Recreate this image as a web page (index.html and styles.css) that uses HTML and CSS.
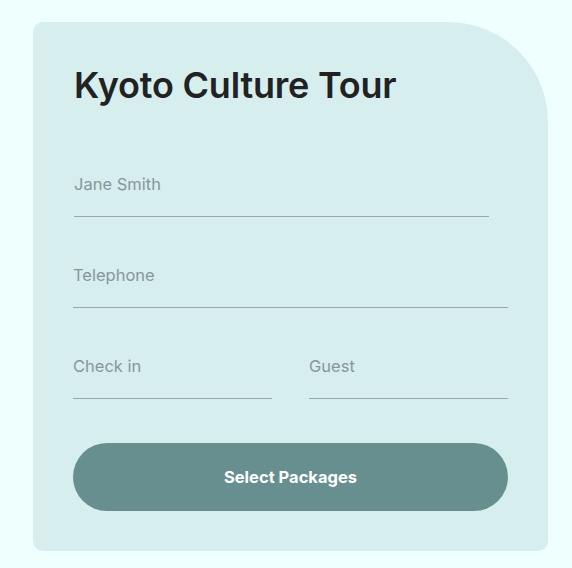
FILE: index.html
```html
<!DOCTYPE html>
<html lang="en">
<head>
    <meta charset="UTF-8">
    <meta name="viewport" content="width=device-width, initial-scale=1.0">
    <title>Kyoto Culture Tour</title>
    <link rel="stylesheet" href="styles.css">
</head>
<body>

    <div class="booking-card">
        <h1>Kyoto Culture Tour</h1>

        <form id="bookingForm">
            <input type="text" class="field field-name" placeholder="Jane Smith">
            <input type="tel" class="field" placeholder="Telephone">
            <div class="field-row">
                <input type="text" class="field" placeholder="Check in">
                <input type="text" class="field" placeholder="Guest">
            </div>
            <button type="submit">Select Packages</button>
        </form>
    </div>

</body>
</html>
```

FILE: styles.css
```css
body {
    margin: 0;
    padding: 22px 0 0 33px;
    background-color: #effffe;
    font-family: Inter, "Open Sans", sans-serif;
}
.booking-card {
    width: 435px;
    padding: 40px 40px 40px 40px;
    background-color: #d7eeef;
    border-radius: 10px 100px 10px 10px;
}
.booking-card h1 {
    margin: 0 0 51px 1px;
    font-size: 36px;
    font-weight: 600;
    color: #222222;
    letter-spacing: -0.2px;
    line-height: 46px;
}
.field {
    display: block;
    box-sizing: border-box;
    width: 100%;
    height: 58px;
    margin-bottom: 33px;
    padding: 0 0 8px 0;
    border: none;
    border-bottom: 1px solid #9aa8ab;
    background: transparent;
    font-family: Inter, sans-serif;
    font-size: 16.5px;
    color: #333333;
    outline: none;
}
.field::placeholder {
    color: #86979a;
}
.field-name {
    width: 415px;
    margin-left: 1px;
}
.field-row {
    display: flex;
    gap: 37px;
}
.field-row .field {
    flex: 1;
    min-width: 0;
}
button {
    display: block;
    width: 100%;
    height: 68px;
    margin-top: 11px;
    border: none;
    border-radius: 34px;
    background-color: #678f8f;
    color: #ffffff;
    font-family: Inter, sans-serif;
    font-size: 16.5px;
    font-weight: 700;
    cursor: pointer;
}
```
